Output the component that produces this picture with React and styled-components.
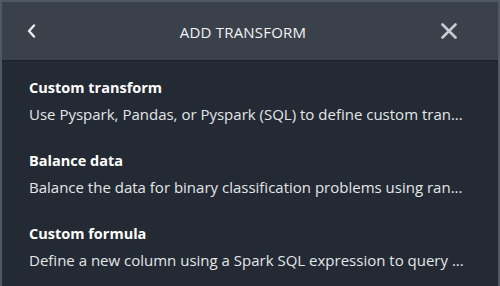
import React from 'react';
import styled, { createGlobalStyle } from 'styled-components';

const GlobalStyle = createGlobalStyle`
    html, body {
        margin: 0;
        padding: 0;
        background: #232a34;
    }
    body {
        font-family: 'Open Sans', 'Noto Sans', sans-serif;
    }
`;

const Panel = styled.div`
    width: 500px;
    height: 286px;
    box-sizing: border-box;
    border: 2px solid #4f5864;
    border-bottom: none;
    background: #232a34;
    display: flex;
    flex-direction: column;
    overflow: hidden;
`;

const Header = styled.div`
    height: 58px;
    flex-shrink: 0;
    background: #3a414b;
    border-bottom: 1px solid #1c222b;
    display: grid;
    grid-template-columns: 60px 1fr 60px;
    align-items: center;
`;

const IconButton = styled.button`
    background: none;
    border: none;
    padding: 0 0 0 ${(p) => (p.right ? '3px' : '0')};
    display: flex;
    align-items: center;
    justify-content: ${(p) => (p.right ? 'flex-start' : 'center')};
    color: #e9ebed;
    cursor: pointer;
`;

const Title = styled.div`
    text-align: center;
    color: #f2f3f3;
    font-size: 15px;
    letter-spacing: 0.2px;
    padding: 2px 14px 0 0;
`;

const List = styled.div`
    display: flex;
    flex-direction: column;
    gap: 27px;
    padding: 17px 24px 0 27px;
`;

const Item = styled.div`
    display: flex;
    flex-direction: column;
    gap: 6px;
    min-width: 0;
`;

const ItemTitle = styled.div`
    color: #ffffff;
    font-size: 14.5px;
    font-weight: 700;
    line-height: 20px;
`;

const ItemDesc = styled.div`
    color: #e4e6e8;
    font-size: 15px;
    line-height: 20px;
    white-space: nowrap;
`;

const items = [
    {
        title: 'Custom transform',
        desc: 'Use Pyspark, Pandas, or Pyspark (SQL) to define custom tran...',
    },
    {
        title: 'Balance data',
        desc: 'Balance the data for binary classification problems using ran...',
    },
    {
        title: 'Custom formula',
        desc: 'Define a new column using a Spark SQL expression to query ...',
    },
];

const App = () => (
    <>
        <GlobalStyle />
        <Panel>
            <Header>
                <IconButton aria-label="Back">
                    <svg width="12" height="14" viewBox="0 0 12 14">
                        <polyline
                            points="8,1.5 3,7 8,12.5"
                            fill="none"
                            stroke="currentColor"
                            strokeWidth="2.4"
                            strokeLinecap="round"
                            strokeLinejoin="round"
                        />
                    </svg>
                </IconButton>
                <Title>ADD TRANSFORM</Title>
                <IconButton aria-label="Close" right>
                    <svg width="16" height="16" viewBox="0 0 16 16">
                        <path
                            d="M1.5 1.5 L14.5 14.5 M14.5 1.5 L1.5 14.5"
                            fill="none"
                            stroke="#c7ccd1"
                            strokeWidth="2.6"
                            strokeLinecap="round"
                        />
                    </svg>
                </IconButton>
            </Header>
            <List>
                {items.map((it) => (
                    <Item key={it.title}>
                        <ItemTitle>{it.title}</ItemTitle>
                        <ItemDesc>{it.desc}</ItemDesc>
                    </Item>
                ))}
            </List>
        </Panel>
    </>
);

export default App;
